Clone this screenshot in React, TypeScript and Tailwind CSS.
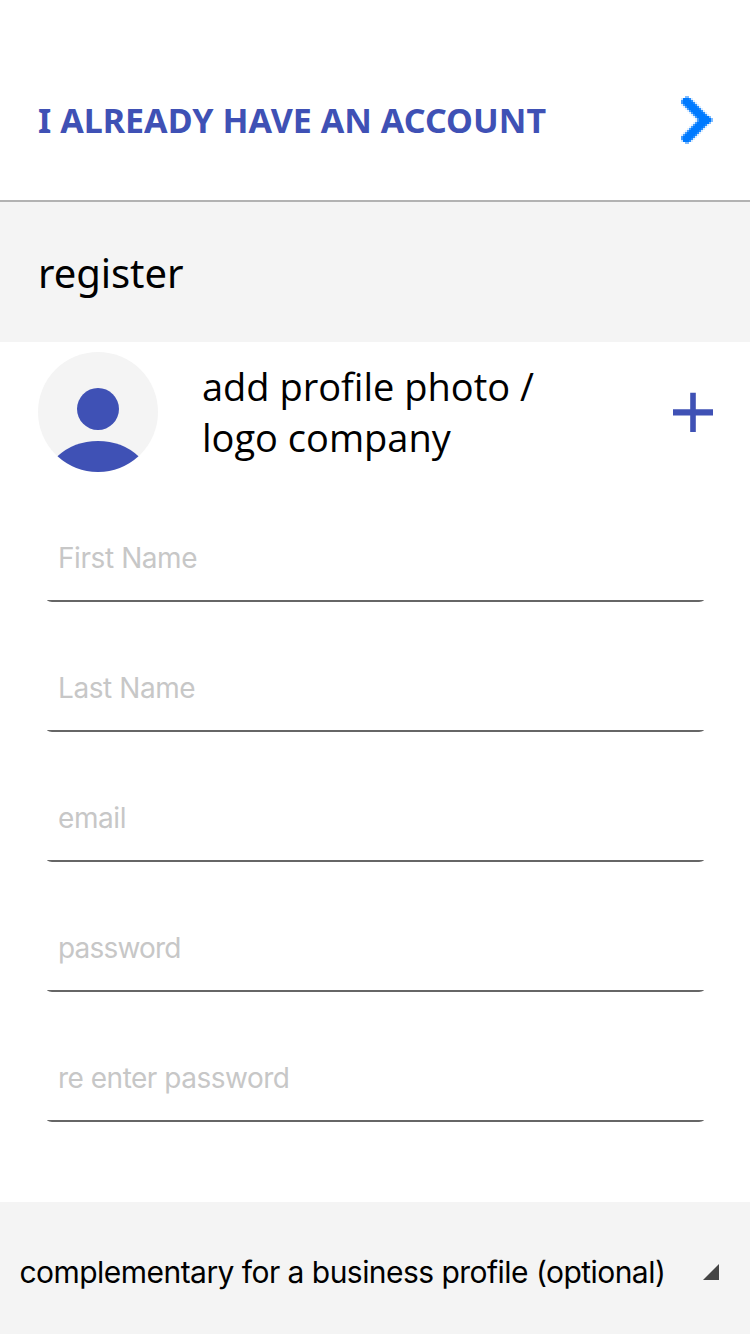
const fields = [
  { label: "First Name", tracking: "tracking-[-0.42px]" },
  { label: "Last Name", tracking: "tracking-[-0.42px]" },
  { label: "email", tracking: "tracking-[-0.4px]" },
  { label: "password", tracking: "tracking-[-0.8px]" },
  { label: "re enter password", tracking: "tracking-[-0.5px]" },
];

// Upper half of the pixel chevron on a 16x24 grid: [row, first solid cell, end of solid cells]
const rows = [
  [1, 1, 4], [2, 1, 5], [3, 1, 6], [4, 2, 7], [5, 3, 8], [6, 4, 9],
  [7, 5, 10], [8, 6, 11], [9, 7, 12], [10, 8, 14], [11, 9, 15],
];

function Chevron() {
  const half = (
    <>
      <rect x="2" y="0" width="2" height="1" opacity=".5" />
      {rows.map(([y, a, b]) => (
        <g key={y}>
          <rect x={a} y={y} width={b - a} height="1" />
          <rect x={a - 1} y={y} width="1" height="1" opacity={y === 1 ? 0.2 : 0.75} />
          <rect x={b} y={y} width="1" height="1" opacity={y > 9 ? 0.5 : 0.85} />
          {y > 3 && <rect x={a - 2} y={y} width="1" height="1" opacity=".12" />}
          {y < 10 && <rect x={b + 1} y={y} width="1" height="1" opacity=".15" />}
        </g>
      ))}
    </>
  );
  return (
    <svg width="32" height="48" viewBox="0 0 16 24" fill="#007aff" shapeRendering="crispEdges">
      {half}
      <g transform="matrix(1 0 0 -1 0 24)">{half}</g>
    </svg>
  );
}

export default function App() {
  return (
    <div className="flex h-[1334px] w-[750px] flex-col overflow-hidden bg-white font-['Noto_Sans',sans-serif] text-black">
      <header className="flex h-[202px] items-center justify-between border-b-2 border-[#b2b2b2] pt-10 pr-[37px] pl-[38px]">
        <a className="text-[34px] leading-[50px] font-bold tracking-[0.03px] whitespace-nowrap text-[#3f51b5]">I ALREADY HAVE AN ACCOUNT</a>
        <Chevron />
      </header>
      <h1 className="flex h-[140px] items-center bg-[#f4f4f4] pt-[2px] pl-[38px] text-[40px] leading-[54px] tracking-[-0.05px]">register</h1>
      <section className="flex h-[140px] items-center pr-[37px] pl-[38px]">
        <svg width="120" height="120" viewBox="0 0 120 120">
          <circle cx="60" cy="60" r="60" fill="#f4f4f4" />
          <circle cx="60" cy="57" r="21" fill="#3f51b5" />
          <path d="M19.5 104.27Q36 89 60 89Q84 89 100.5 104.27A60 60 0 0 1 19.5 104.27Z" fill="#3f51b5" />
        </svg>
        <p className="ml-[44px] flex-1 font-['Open_Sans',sans-serif] text-[38px] leading-[51px]">add profile photo /<br />logo company</p>
        <svg width="40" height="40" viewBox="0 0 40 40">
          <path d="M17.2 .7H22.8V17.3H40V23.5H22.8V40H17.2V23.5H0V17.3H17.2Z" fill="#3f51b5" />
        </svg>
      </section>
      <form className="flex h-[720px] flex-col gap-10 pt-[30px] pr-[46px] pl-[47px]">
        {fields.map((f) => (
          <div key={f.label} className="flex h-[90px] shrink-0 flex-col">
            <label className={`flex h-[88px] items-center pt-[3px] pl-[11px] font-['Inter',sans-serif] text-[28px] text-[#c7c7c7] ${f.tracking}`}>{f.label}</label>
            <div className="h-[2px] rounded-[0_0_8px_8px/0_0_2px_2px] bg-[#666]" />
          </div>
        ))}
      </form>
      <footer className="flex h-[132px] items-center justify-between bg-[#f4f4f4] pt-[9px] pr-[31px] pl-[19.5px] font-['Inter',sans-serif] text-[30px]">
        <span className="tracking-[-0.54px] whitespace-nowrap">complementary for a business profile (optional)</span>
        <svg className="mb-px" width="16" height="16" viewBox="0 0 16 16"><path d="M16 0V16H0Z" fill="#444" /></svg>
      </footer>
    </div>
  );
}
